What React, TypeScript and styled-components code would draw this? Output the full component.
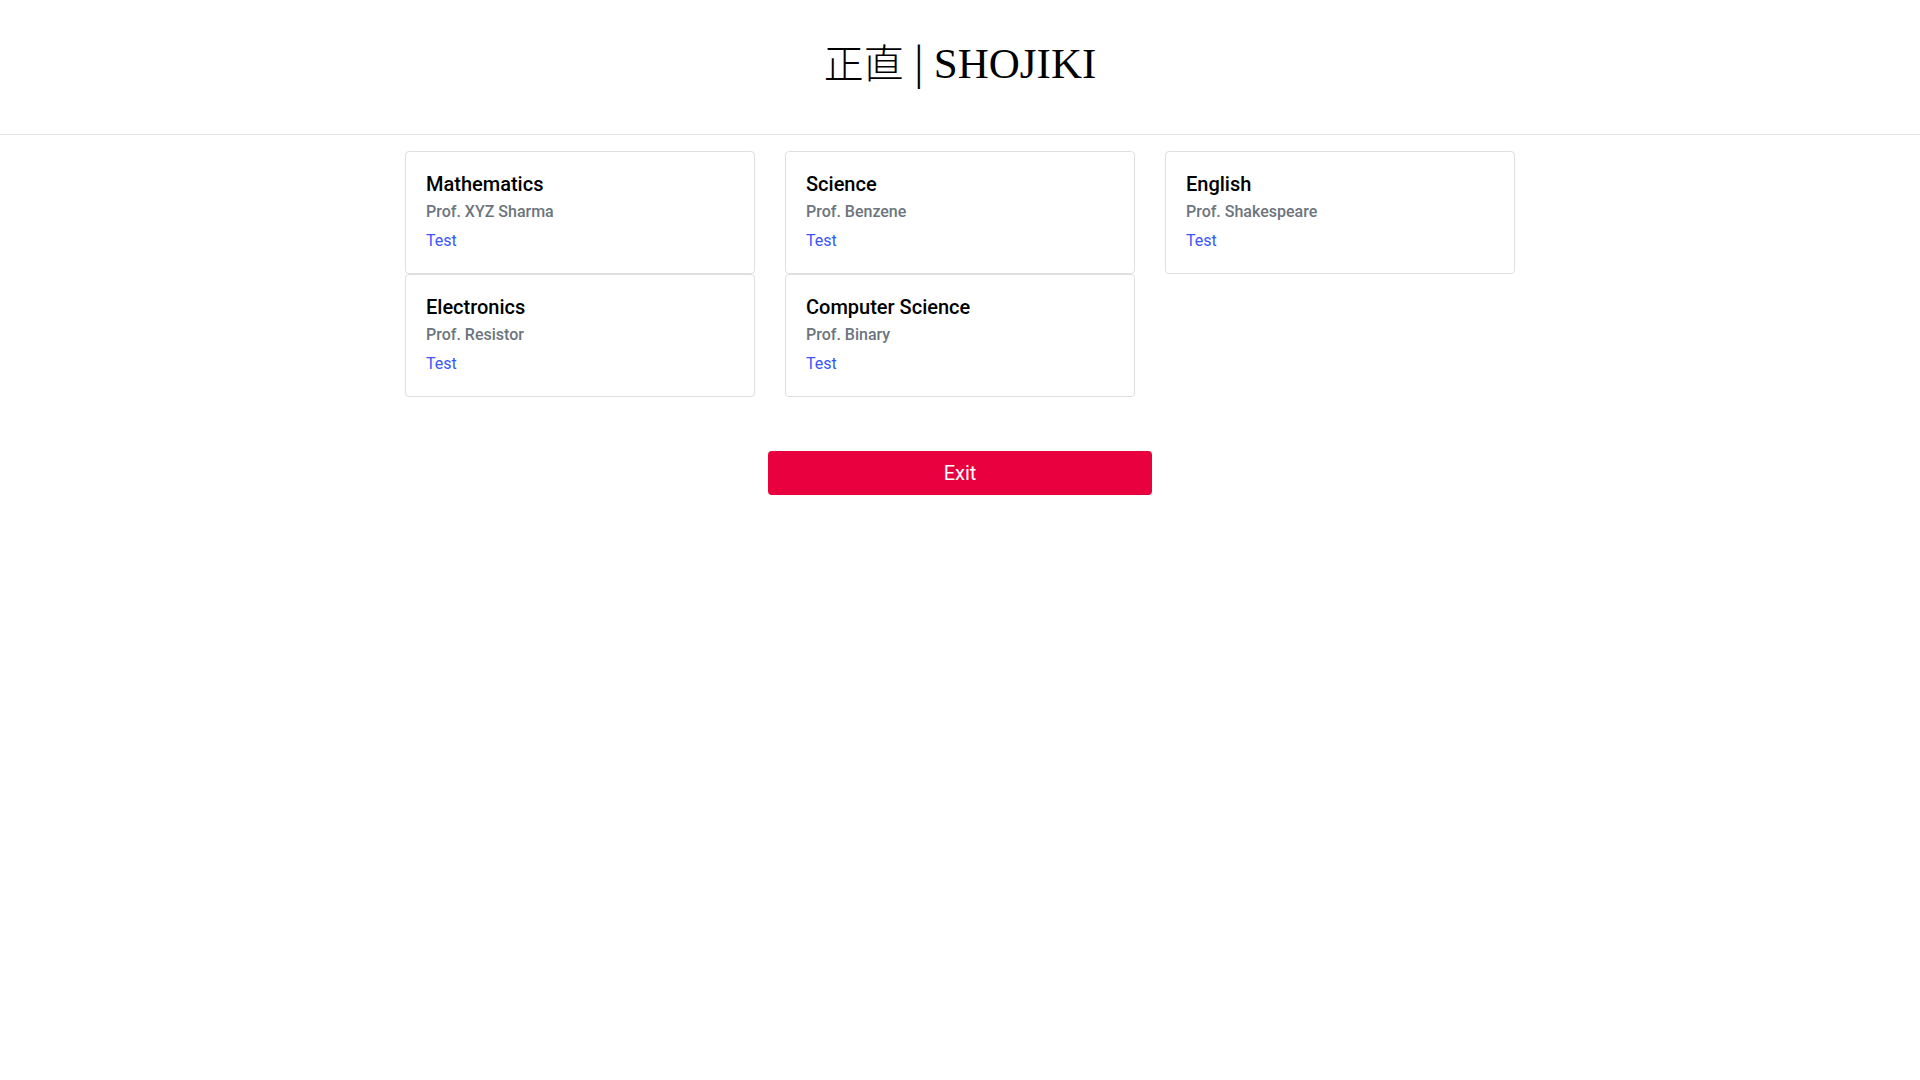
import styled, { createGlobalStyle } from 'styled-components';

const subjects = [
  { name: 'Mathematics', prof: 'Prof. XYZ Sharma' },
  { name: 'Science', prof: 'Prof. Benzene' },
  { name: 'English', prof: 'Prof. Shakespeare' },
  { name: 'Electronics', prof: 'Prof. Resistor' },
  { name: 'Computer Science', prof: 'Prof. Binary' },
];

const GlobalStyle = createGlobalStyle`
  * { box-sizing: border-box; }
  body {
    margin: 0;
    background: #fff;
    font-family: Roboto, "Liberation Sans", sans-serif;
    color: #212529;
  }
`;

export default () => (
  <>
    <GlobalStyle />
    <Header>
      <Title>
        <Kanji>正直</Kanji> <Pipe>|</Pipe> SHOJIKI
      </Title>
    </Header>
    <Container>
      <Row>
        {subjects.map((s, i) => (
          <Col key={i}>
            <Card>
              <CardTitle>{s.name}</CardTitle>
              <CardSubtitle>{s.prof}</CardSubtitle>
              <CardLink href="#">Test</CardLink>
            </Card>
          </Col>
        ))}
      </Row>
    </Container>
    <ExitWrap>
      <ExitButton>Exit</ExitButton>
    </ExitWrap>
  </>
);

const Header = styled.header`
  height: 135px;
  border-bottom: 1px solid #e5e5e5;
  display: flex;
  justify-content: center;
  padding-top: 38px;
`;

const Title = styled.h1`
  margin: 0;
  font-family: "Liberation Serif", "Noto Sans CJK JP", serif;
  font-weight: 400;
  font-size: 43px;
  line-height: 52px;
  color: #000;
`;

const Kanji = styled.span`
  font-size: 40px;
  font-weight: 300;
`;

const Pipe = styled.span`
  display: inline-block;
  transform: scaleY(1.14) translateY(-1px);
`;

const Container = styled.div`
  width: 1140px;
  margin: 16px auto 0;
  padding: 0 15px;
`;

const Row = styled.div`
  display: flex;
  flex-wrap: wrap;
  margin: 0 -15px;
`;

const Col = styled.div`
  width: 33.3333%;
  padding: 0 15px;
`;

const Card = styled.div`
  border: 1px solid #dfdfdf;
  border-radius: 4px;
  padding: 20px;
  display: flex;
  flex-direction: column;
  align-items: flex-start;
`;

const CardTitle = styled.h5`
  margin: 0 0 12px;
  font-size: 20px;
  font-weight: 500;
  line-height: 1.2;
  color: #000;
`;

const CardSubtitle = styled.h6`
  margin: -6px 0 8px;
  font-size: 16px;
  font-weight: 500;
  line-height: 1.2;
  color: #6c757d;
`;

const CardLink = styled.a`
  font-size: 16px;
  line-height: 24px;
  color: #3a55fb;
  text-decoration: none;
`;

const ExitWrap = styled.div`
  display: flex;
  justify-content: center;
  margin-top: 54px;
`;

const ExitButton = styled.button`
  width: 20%;
  height: 44px;
  border: none;
  border-radius: 4px;
  background: #e9003e;
  color: #fff;
  font-family: Roboto, "Liberation Sans", sans-serif;
  font-size: 20px;
  cursor: pointer;
`;
